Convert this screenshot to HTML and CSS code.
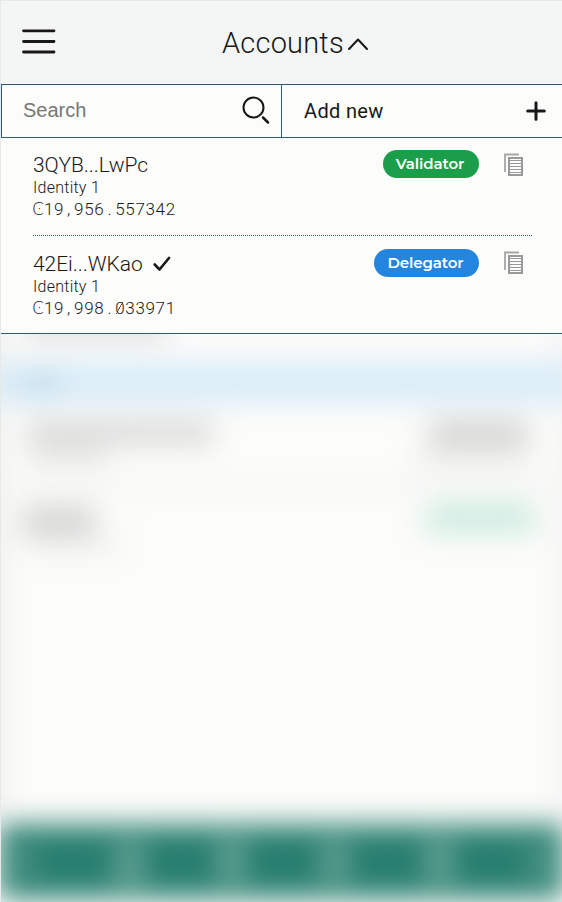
FILE: index.html
```html
<!DOCTYPE html>
<html lang="en">
<head>
<meta charset="utf-8">
<title>Accounts</title>
<link rel="stylesheet" href="styles.css">
</head>
<body>
<div class="app">
  <header class="header">
    <svg class="menu" width="34" height="26" viewBox="0 0 34 26"><path d="M1.5 1.8h30.5M1.5 12.5h30.5M1.5 23h30.5"/></svg>
    <h1 class="title">Accounts</h1>
    <svg class="chevron" width="22" height="14" viewBox="0 0 22 14"><path d="M2 12 11 2.5 20 12"/></svg>
  </header>
  <section class="accounts">
    <div class="actions">
      <label class="search"><input class="search-input" type="text" placeholder="Search">
        <svg width="30" height="30" viewBox="0 0 30 30"><circle cx="12.5" cy="12.5" r="10"/><path class="handle" d="m22 22.5 5 5"/></svg>
      </label>
      <button class="add"><span>Add new</span>
        <svg width="20" height="20" viewBox="0 0 20 20"><path d="M10 1.7v16.6M1.7 10h16.6"/></svg>
      </button>
    </div>
    <article class="account">
      <div class="details">
        <div class="name">3QYB...LwPc</div>
        <div class="identity">Identity 1</div>
        <div class="balance"><span class="symbol">Ͼ</span>19<span class="mark">,</span>956<span class="mark">.</span>557342</div>
      </div>
      <span class="badge validator">Validator</span>
      <svg class="copy" width="20" height="24" viewBox="0 0 20 24"><path d="M1 19V1.5H15"/><path class="sheet" d="M5 5h13v17H5z"/><path class="lines" d="M6 7.5h12M6 10.5h12M6 13.5h12M6 16.5h12M6 19.5h12"/></svg>
    </article>
    <article class="account">
      <div class="details">
        <div class="name">42Ei...WKao<svg class="check" width="18" height="16" viewBox="0 0 18 16"><path d="m1.7 8.5 4.8 5L16 2"/></svg></div>
        <div class="identity">Identity 1</div>
        <div class="balance"><span class="symbol">Ͼ</span>19<span class="mark">,</span>998<span class="mark">.</span><span class="zero">0</span>33971</div>
      </div>
      <span class="badge delegator">Delegator</span>
      <svg class="copy" width="20" height="24" viewBox="0 0 20 24"><path d="M1 19V1.5H15"/><path class="sheet" d="M5 5h13v17H5z"/><path class="lines" d="M6 7.5h12M6 10.5h12M6 13.5h12M6 16.5h12M6 19.5h12"/></svg>
    </article>
  </section>
  <main class="backdrop">
    <svg class="haze" width="561" height="568" viewBox="0 0 561 568">
      <defs>
        <filter id="soft" filterUnits="userSpaceOnUse" x="-60" y="-60" width="681" height="700" color-interpolation-filters="sRGB"><feGaussianBlur stdDeviation="14"/></filter>
      </defs>
      <g filter="url(#soft)">
        <path fill="#eeeeec" d="M-50-40H2V490H-50z"/>
        <path fill="#f2f2f2" d="M559-40h50V490h-50z"/>
        <path fill="#dbdbda" d="M25-20H165V4H25z"/>
        <path fill="#d8ecf8" d="M-12 28H573V69H-12z"/>
        <path fill="#c3dceb" d="M20 38H60V60H20z"/>
        <path fill="#dadad9" d="M26 86H212V111H26z"/>
        <path fill="#e8e8e7" d="M28 111H106V132H28z"/>
        <path fill="#d5d5d4" d="M429 85H527V114H429z"/>
        <path fill="#efefee" d="M414 114H526V134H414z"/>
        <path fill="#e6e6e5" d="M12 149H549V153H12z"/>
        <path fill="#d4d4d3" d="M22 172H94V202H22z"/>
        <path fill="#f2f2f1" d="M24 202H118V221H24z"/>
        <path fill="#cdece0" d="M424 169H534V199H424z"/>
        <path fill="#287f6f" d="M-2 491H563V564H-2z"/>
        <path fill="#6da79b" d="M14 517H30V541H14zM115 510H142V550H115zM217 508H244V547H217zM320 510H347V546H320zM425 508H452V547H425zM530 516H546V542H530z"/>
      </g>
    </svg>
  </main>
</div>
</body>
</html>
```
FILE: styles.css
```css
* { box-sizing: border-box; }
body { margin: 0; background: #fcfdfb; color: #181818; font-family: Roboto, sans-serif; }
.app { width: 562px; height: 902px; display: flex; flex-direction: column; border: 1px solid #e7e9e8; border-right: 0; border-bottom: 0; background: #fcfcfa; overflow: hidden; }
svg { display: block; fill: none; stroke: #181818; stroke-linecap: round; stroke-linejoin: round; flex: none; }
.header { height: 83px; flex: none; display: flex; align-items: center; background: #f4f6f5; padding-left: 21px; }
.menu { stroke-width: 2.8; margin-top: -2px; }
.title { margin: 1px 0 0 166px; width: 121px; font-size: 29px; font-weight: 300; line-height: 34px; letter-spacing: .2px; white-space: nowrap; }
.chevron { stroke-width: 2; margin: 3px 0 0 4px; }
.accounts { flex: none; height: 250px; background: #fcfcfa; border-bottom: 1px solid #2d5a74; }
.actions { display: flex; height: 54px; border: 1px solid #2d5a74; border-right: 0; }
.search { width: 280px; display: flex; align-items: center; justify-content: space-between; padding: 0 10px 0 21px; border-right: 1px solid #2d5a74; }
.search-input { width: 180px; height: 28px; margin-top: -1px; padding: 0; border: 0; outline: 0; background: transparent; font: 20px "Liberation Sans", sans-serif; }
.search-input::placeholder { color: #777; opacity: 1; }
.search svg { stroke-width: 2; margin-top: -2px; }
.search .handle { stroke-width: 2.5; }
.add { flex: 1; display: flex; align-items: center; justify-content: space-between; padding: 0 16px 0 22px; border: 0; background: transparent; color: #181818; font: 20px Roboto, sans-serif; letter-spacing: .35px; }
.add svg { stroke-width: 3; margin-top: -1px; }
.account { height: 97px; margin: 0 30px 0 32px; display: flex; align-items: flex-start; }
.account + .account { height: 98px; border-top: 1px dotted #2d5a74; }
.details { flex: 1; padding-top: 15px; font-weight: 300; }
.account + .account .details { padding-top: 16px; }
.name { height: 25px; display: flex; align-items: center; font-size: 21px; line-height: 25px; letter-spacing: -.05px; }
.check { stroke-width: 2.6; margin: -1px 0 0 10px; }
.identity { font-size: 16px; line-height: 20px; letter-spacing: .25px; }
.balance { height: 23px; font-size: 17px; line-height: 23px; letter-spacing: .68px; white-space: nowrap; }
.symbol { font-family: "DejaVu Sans", sans-serif; font-size: 17px; line-height: 1; font-weight: 200; margin-left: -1px; letter-spacing: 0; }
.mark { padding: 0 3px; }
.zero { background: linear-gradient(118deg, transparent 47%, #444 48%, #444 52%, transparent 53%) 1px 4px / 7px 12px no-repeat; }
.badge { height: 28px; margin-top: 12px; border-radius: 14px; color: #fff; font: 600 15px/28px Montserrat, Inter, sans-serif; letter-spacing: -.1px; padding-right: 2px; text-align: center; }
.account + .account .badge { margin-top: 13px; }
.validator { width: 96px; background: #1a9e49; }
.delegator { width: 105px; background: #2485df; }
.copy { margin: 15px 8px 0 25px; stroke: #a5a5a4; stroke-width: 1.8; stroke-linecap: butt; stroke-linejoin: miter; }
.copy .sheet { stroke: #999; stroke-width: 2; }
.copy .lines { stroke: #999; stroke-width: 1.2; }
.backdrop { flex: 1; min-height: 0; overflow: hidden; }
.haze { stroke: none; }
```
